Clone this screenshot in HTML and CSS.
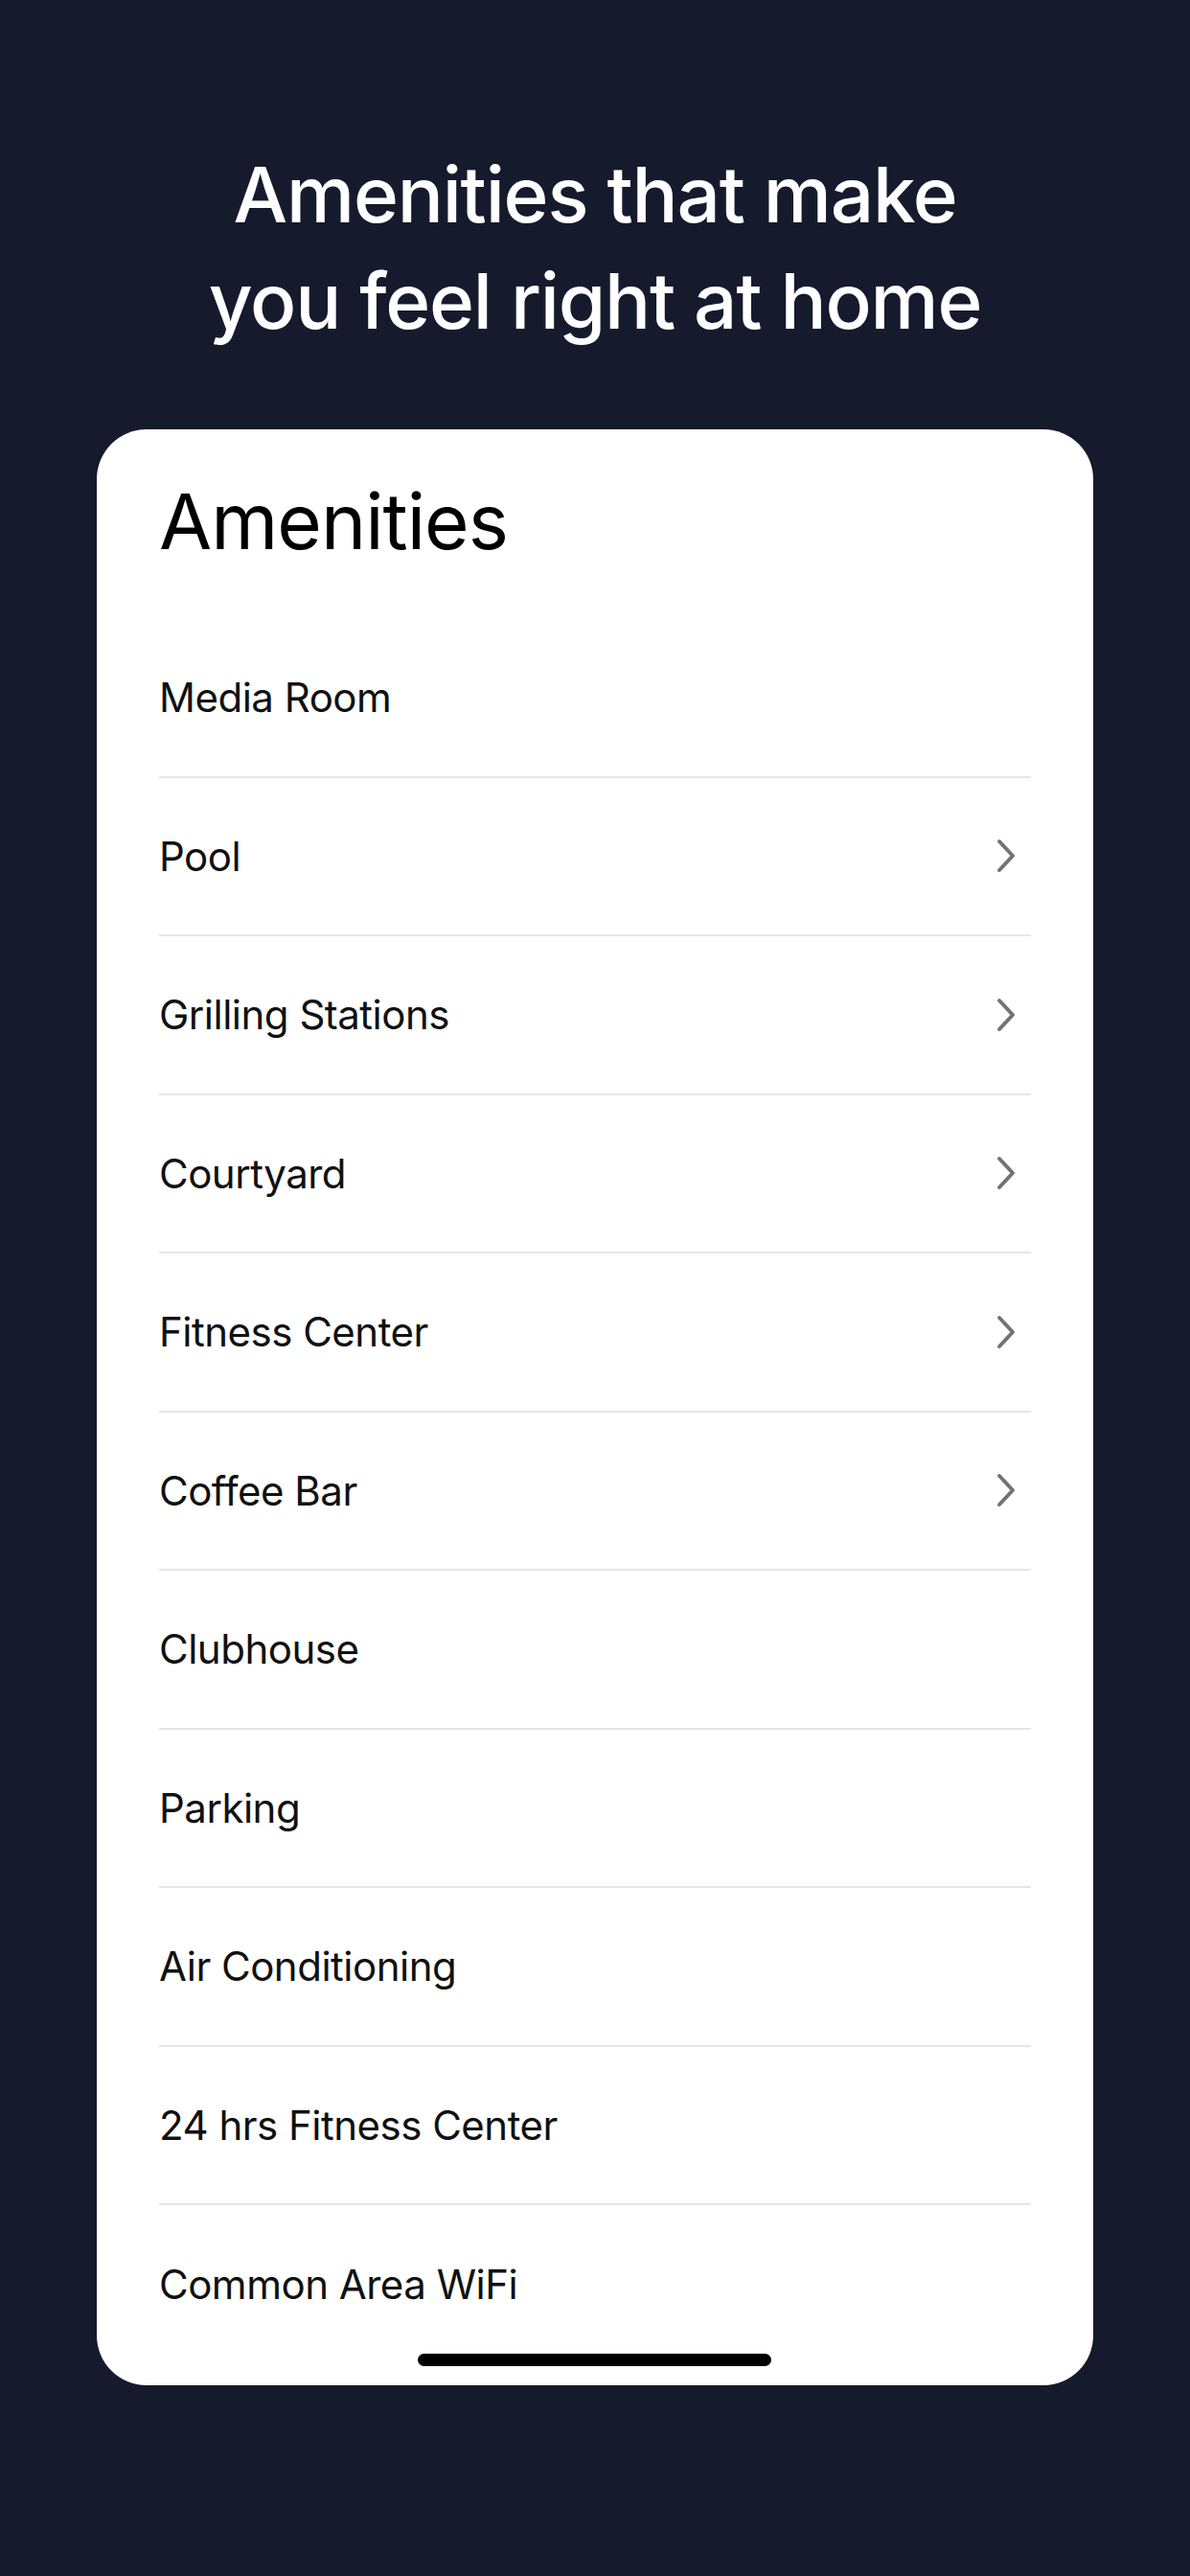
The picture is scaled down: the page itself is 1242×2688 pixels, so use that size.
FILE: index.html
```html
<!DOCTYPE html>
<html lang="en">
<head>
<meta charset="utf-8">
<title>Amenities</title>
<link rel="stylesheet" href="styles.css">
</head>
<body>
<div class="screen">
  <h1 class="headline">Amenities that make<br>you feel right at home</h1>
  <section class="card">
    <h2 class="card-title">Amenities</h2>
    <ul class="list">
      <li class="row"><span>Media Room</span></li>
      <li class="row"><span>Pool</span><svg class="chev" viewBox="0 0 20 36" width="20" height="36"><polyline points="3,3 17,18 3,33"/></svg></li>
      <li class="row"><span>Grilling Stations</span><svg class="chev" viewBox="0 0 20 36" width="20" height="36"><polyline points="3,3 17,18 3,33"/></svg></li>
      <li class="row"><span>Courtyard</span><svg class="chev" viewBox="0 0 20 36" width="20" height="36"><polyline points="3,3 17,18 3,33"/></svg></li>
      <li class="row"><span>Fitness Center</span><svg class="chev" viewBox="0 0 20 36" width="20" height="36"><polyline points="3,3 17,18 3,33"/></svg></li>
      <li class="row"><span>Coffee Bar</span><svg class="chev" viewBox="0 0 20 36" width="20" height="36"><polyline points="3,3 17,18 3,33"/></svg></li>
      <li class="row"><span>Clubhouse</span></li>
      <li class="row"><span>Parking</span></li>
      <li class="row"><span>Air Conditioning</span></li>
      <li class="row"><span>24 hrs Fitness Center</span></li>
      <li class="row last"><span>Common Area WiFi</span></li>
    </ul>
    <div class="home-indicator"></div>
  </section>
</div>
</body>
</html>
```

FILE: styles.css
```css
html, body {
  margin: 0;
  padding: 0;
  background: #161a2d;
}
.screen {
  width: 1242px;
  height: 2688px;
  background: #161a2d;
  padding-top: 147px;
  box-sizing: border-box;
  font-family: Inter, "Noto Sans", sans-serif;
}
.headline {
  margin: 0;
  color: #ffffff;
  text-align: center;
  font-size: 80px;
  line-height: 111px;
  font-weight: 500;
  letter-spacing: -1.2px;
}
.card {
  position: relative;
  margin: 79px 101px 0;
  height: 2041px;
  background: #ffffff;
  border-radius: 52px;
  overflow: hidden;
  padding: 46px 65px 0;
  box-sizing: border-box;
}
.card-title {
  margin: 0;
  font-size: 80px;
  line-height: 100px;
  font-weight: 400;
  color: #000;
  letter-spacing: -1px;
}
.list {
  list-style: none;
  margin: 52px 0 0;
  padding: 0;
}
.row {
  height: 165.5px;
  box-sizing: border-box;
  border-bottom: 2px solid #e6e6e6;
  display: flex;
  align-items: center;
  justify-content: space-between;
  padding-right: 16px;
  font-size: 42px;
  color: #111;
  letter-spacing: -0.5px;
}
.row.last {
  border-bottom: none;
}
.chev {
  display: block;
}
.chev polyline {
  fill: none;
  stroke: #737373;
  stroke-width: 4;
  stroke-linecap: round;
  stroke-linejoin: round;
}
.home-indicator {
  position: absolute;
  left: 335px;
  bottom: 20px;
  width: 369px;
  height: 13px;
  border-radius: 7px;
  background: #000;
}
```
